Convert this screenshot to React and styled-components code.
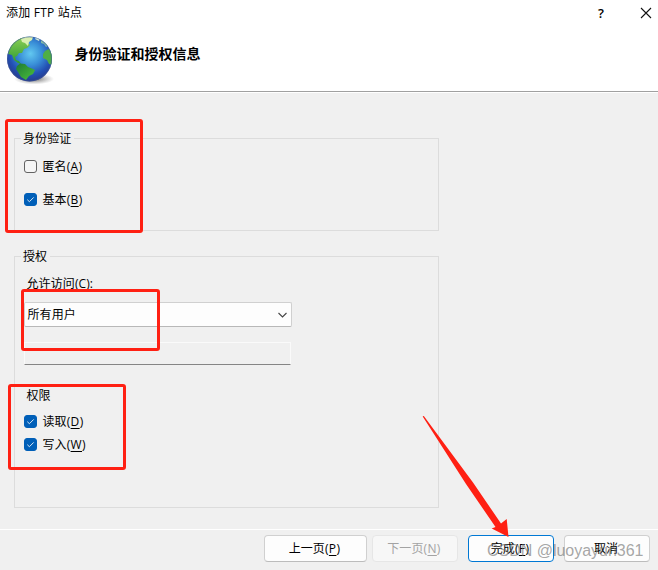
import React from "react";
import styled, { createGlobalStyle, css } from "styled-components";

const GlobalStyle = createGlobalStyle`
  * {
    box-sizing: border-box;
  }

  body {
    margin: 0;
    overflow: hidden;
    background: #f0f0f0;
  }
`;

const Dialog = styled.div`
  position: relative;
  display: flex;
  flex-direction: column;
  width: 658px;
  height: 570px;
  overflow: hidden;
  background: #f0f0f0;
  color: #000;
  font: 12px/16px "Open Sans", "Noto Sans CJK SC", sans-serif;
  letter-spacing: 0.1px;
  white-space: nowrap;
`;

const Header = styled.header`
  height: 92px;
  background: #fff;
  border-bottom: 1px solid #a0a0a0;
`;

const TitleBar = styled.div`
  display: flex;
  align-items: center;
  height: 25px;
  padding: 0 6px;
`;

const Title = styled.span`
  flex: 1;
  letter-spacing: 0.22px;
`;

const HelpButton = styled.span`
  width: 10px;
  margin-right: 34px;
  text-align: center;
  font-size: 13px;
  font-weight: 600;
`;

const Banner = styled.div`
  display: flex;
  padding: 8px 5px 0;
`;

const Heading = styled.h1`
  margin: 12px 0 0 19.5px;
  font-size: 14px;
  line-height: 18px;
  font-weight: 700;
  letter-spacing: 0;
`;

const Body = styled.main`
  flex: 1;
  padding: 38px 14px 0;
  border-top: 1px solid #fff;
`;

const Group = styled.section`
  width: 425px;
  height: ${(props) => props.$height}px;
  margin-top: ${(props) => props.$top || 0}px;
  padding: 0 9px;
  border: 1px solid #dcdcdc;
`;

const Legend = styled.h2`
  width: max-content;
  height: 16px;
  margin: -8px 0 0 -3px;
  padding: 0 3px 0 2px;
  background: #f0f0f0;
  font-size: 12px;
  line-height: 16px;
  font-weight: 400;
`;

const CheckRow = styled.div`
  display: flex;
  align-items: center;
  gap: 5.5px;
  height: 13px;
  margin-top: ${(props) => props.$top}px;
`;

const Box = styled.span`
  display: flex;
  align-items: center;
  justify-content: center;
  width: 13px;
  height: 13px;
  border: 1px solid ${(props) => (props.$checked ? "#005fb8" : "#626262")};
  border-radius: 3px;
  background: ${(props) => (props.$checked ? "#005fb8" : "#f5f5f5")};
`;

const Shortcut = styled.span`
  letter-spacing: 0.35px;
`;

const Key = styled.span`
  text-decoration: underline;
  text-underline-offset: 2px;
  text-decoration-thickness: 1px;
`;

const Label = styled.div`
  height: 16px;
  margin: ${(props) => props.$top}px 0 0 2.5px;
`;

const Select = styled.div`
  display: flex;
  align-items: center;
  justify-content: space-between;
  width: 268px;
  height: 25px;
  margin-top: 10px;
  padding: 0 3px 0 2.5px;
  border: 1px solid #d0d0d0;
  border-bottom-color: #b8b8b8;
  border-radius: 2px;
  background: #fdfdfd;
`;

const DisabledInput = styled.div`
  width: 267px;
  height: 23px;
  margin-top: 15px;
  border: 1px solid #fafafa;
  border-bottom: 1px solid #858585;
`;

const Footer = styled.footer`
  display: flex;
  height: 41px;
  padding: 5px 8px 0 264px;
  border-top: 1px solid #fff;
`;

const Button = styled.button`
  width: ${(props) => props.$width || 86}px;
  height: 27px;
  margin: 0 ${(props) => props.$gap || 0}px 0 0;
  padding: 0 2px 0 0;
  border: 1px solid #d0d0d0;
  border-bottom-color: #bcbcbc;
  border-radius: 4px;
  background: #fdfdfd;
  color: #000;
  font: inherit;
  letter-spacing: inherit;

  ${(props) =>
    props.$primary &&
    css`
      border-color: #0078d4;
    `}

  &:disabled {
    border-color: #e6e6e6;
    background: #f7f7f7;
    color: #a3a3a3;
  }
`;

const Highlight = styled.div`
  position: absolute;
  left: ${(props) => props.$x}px;
  top: ${(props) => props.$y}px;
  width: ${(props) => props.$w}px;
  height: ${(props) => props.$h}px;
  border: 3px solid #ff2013;
  border-radius: 3px;
`;

const Arrow = styled.svg`
  position: absolute;
  left: 420px;
  top: 412px;
`;

const Watermark = styled.div`
  position: absolute;
  left: 487px;
  top: 541px;
  color: rgba(110, 110, 110, 0.62);
  font: 16px/20px "Liberation Sans", Arial, sans-serif;
  letter-spacing: -0.02px;
`;

function Globe() {
  return (
    <svg width="50" height="52" viewBox="0 0 50 52">
      <defs>
        <radialGradient id="sea" cx="0.52" cy="0.38" r="0.62">
          <stop offset="0" stopColor="#62c8f0" />
          <stop offset="0.4" stopColor="#3a90d8" />
          <stop offset="0.75" stopColor="#2350b4" />
          <stop offset="1" stopColor="#263a8c" />
        </radialGradient>
        <linearGradient id="land" x1="0" y1="0" x2="0" y2="1">
          <stop offset="0" stopColor="#8ccf55" />
          <stop offset="1" stopColor="#2a9a30" />
        </linearGradient>
        <linearGradient id="south" x1="0" y1="0" x2="1" y2="1">
          <stop offset="0" stopColor="#1f7a35" />
          <stop offset="1" stopColor="#4cc23a" />
        </linearGradient>
        <radialGradient id="shade">
          <stop offset="0" stopColor="#555" stopOpacity="0.9" />
          <stop offset="1" stopColor="#888" stopOpacity="0" />
        </radialGradient>
        <clipPath id="ball">
          <circle cx="24.5" cy="26" r="22.5" />
        </clipPath>
      </defs>
      <ellipse cx="29" cy="46" rx="20" ry="5.5" fill="url(#shade)" />
      <circle cx="24.5" cy="26" r="22.5" fill="url(#sea)" />
      <g clipPath="url(#ball)">
        <path
          d="M3 21 5 13 10 7 17 4 23 6 22 9 25 12 22 15 19 16 17 20 14 20 12 23 10 24 11 27 14 28 16 31 13 30 9 27 7 22Z"
          fill="url(#land)"
        />
        <path d="M16 6 22 3 28 4 27 7 24 9 23 13 20 10 17 9Z" fill="#d9efb0" />
        <path
          d="M12 33 15 30.5 20 31 23 34 28 36 30 37 28 41 24 43 21 47 16 44 13 39 11 36Z"
          fill="url(#south)"
        />
        <path d="M40 18 44 16 48 22 47 32 44 31 42 27 38 25 38 21Z" fill="#4fae45" />
        <path d="M36 6 40 8 43 13 41 14 39 11 36 10Z" fill="#82b9a8" />
        <path d="M31 4 35 5 34 8 30 6Z" fill="#d3ecdc" />
      </g>
      <circle cx="24.5" cy="26" r="22" fill="none" stroke="#435b95" strokeOpacity="0.5" />
    </svg>
  );
}

function AccessKey({ children }) {
  return (
    <Shortcut>
      (<Key>{children}</Key>)
    </Shortcut>
  );
}

function Check({ top, checked, text, accessKey }) {
  return (
    <CheckRow $top={top}>
      <Box $checked={checked}>
        {checked && (
          <svg width="9" height="9" viewBox="0 0 9 9">
            <path d="M1.3 4.7 3.4 6.7 7.7 2.4" fill="none" stroke="#d7e7f5" />
          </svg>
        )}
      </Box>
      <span>
        {text}
        <AccessKey>{accessKey}</AccessKey>
      </span>
    </CheckRow>
  );
}

export default function App() {
  return (
    <>
      <GlobalStyle />
      <Dialog>
        <Header>
          <TitleBar>
            <Title>添加 FTP 站点</Title>
            <HelpButton>?</HelpButton>
            <svg width="12" height="12" viewBox="0 0 12 12">
              <path d="M1 1 11 11M11 1 1 11" fill="none" stroke="#111" strokeWidth="1.1" />
            </svg>
          </TitleBar>
          <Banner>
            <Globe />
            <Heading>身份验证和授权信息</Heading>
          </Banner>
        </Header>

        <Body>
          <Group $height={93} $top={7}>
            <Legend>身份验证</Legend>
            <Check top={13} text="匿名" accessKey="A" />
            <Check top={20} checked text="基本" accessKey="B" />
          </Group>

          <Group $height={252} $top={25}>
            <Legend>授权</Legend>
            <Label $top={11}>允许访问(C):</Label>
            <Select>
              <span>所有用户</span>
              <svg width="11" height="8" viewBox="0 0 11 8">
                <path d="M1.5 2 5.5 6 9.5 2" fill="none" stroke="#444" strokeWidth="1.1" />
              </svg>
            </Select>
            <DisabledInput />
            <Label $top={23}>权限</Label>
            <Check top={11} checked text="读取" accessKey="D" />
            <Check top={10} checked text="写入" accessKey="W" />
          </Group>
        </Body>

        <Footer>
          <Button $width={103} $gap={5}>
            上一页<AccessKey>P</AccessKey>
          </Button>
          <Button $gap={10} disabled>
            下一页<AccessKey>N</AccessKey>
          </Button>
          <Button $gap={10} $primary>
            完成<AccessKey>F</AccessKey>
          </Button>
          <Button>取消</Button>
        </Footer>

        <Highlight $x={5} $y={119} $w={138} $h={114} />
        <Highlight $x={21} $y={289} $w={139} $h={62} />
        <Highlight $x={8} $y={384} $w={118} $h={86} />
        <Arrow width="94" height="130" viewBox="0 0 94 130">
          <path
            d="M2.7 4.5Q3 3.6 4 4.3L53 70.5 81 111.5 86.7 107 88.5 125 71.7 116.5 75.5 115 46 72Z"
            fill="#ff2013"
          />
        </Arrow>
        <Watermark>CSDN @luoyayun361</Watermark>
      </Dialog>
    </>
  );
}
